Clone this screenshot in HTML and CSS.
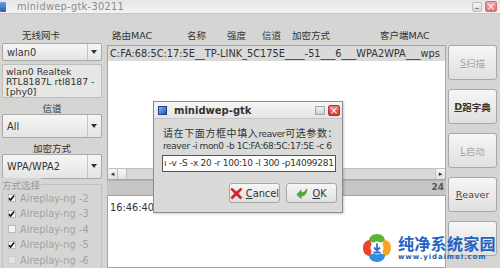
FILE: index.html
```html
<!DOCTYPE html>
<html>
<head>
<meta charset="utf-8">
<link rel="stylesheet" href="styles.css">
</head>
<body>
<div class="titlebar">
  <span class="appicon"></span>
  <span class="title">minidwep-gtk-30211</span>
  <span class="tb-spacer"></span>
  <span class="tb-min"></span>
  <span class="tb-close">×</span>
</div>
<div class="main">
  <div class="left">
    <div class="lhead">无线网卡</div>
    <div class="combo c-wlan"><span class="cval">wlan0</span><span class="carrow"></span></div>
    <div class="devinfo">wlan0 Realtek<br>RTL8187L rtl8187 -<br>[phy0]</div>
    <div class="llabel">信道</div>
    <div class="combo c-big"><span class="cval">All</span><span class="carrow"></span></div>
    <div class="llabel">加密方式</div>
    <div class="combo c-big"><span class="cval">WPA/WPA2</span><span class="carrow"></span></div>
    <div class="frame">
      <div class="frame-label">方式选择</div>
      <div class="chk"><span class="box on"><svg viewBox="0 0 8 8"><path d="M1 4.2 L3 6.4 L7 1.2" /></svg></span>Aireplay-ng -2</div>
      <div class="chk"><span class="box on"><svg viewBox="0 0 8 8"><path d="M1 4.2 L3 6.4 L7 1.2" /></svg></span>Aireplay-ng -3</div>
      <div class="chk"><span class="box"></span>Aireplay-ng -4</div>
      <div class="chk"><span class="box on"><svg viewBox="0 0 8 8"><path d="M1 4.2 L3 6.4 L7 1.2" /></svg></span>Aireplay-ng -5</div>
      <div class="chk"><span class="box dim"></span>Aireplay-ng -6</div>
    </div>
  </div>
  <div class="center">
    <div class="chead">
      <span class="h1">路由MAC</span>
      <span class="h2">名称</span>
      <span class="h3">强度</span>
      <span class="h4">信道</span>
      <span class="h5">加密方式</span>
      <span class="h6">客户端MAC</span>
    </div>
    <div class="list">
      <div class="row">C:FA:68:5C:17:5E__TP-LINK_5C175E____-51___6___WPA2WPA___wps</div>
    </div>
    <div class="hscroll">
      <span class="sarrow">◂</span><span class="sthumb"></span><span class="strack"></span><span class="sarrow r">▸</span>
    </div>
    <div class="status">24</div>
    <div class="log">16:46:40-</div>
  </div>
  <div class="right">
    <div class="btn dis"><u>S</u>扫描</div>
    <div class="btn strong"><u>D</u>跑字典</div>
    <div class="btn dis"><u>L</u>启动</div>
    <div class="btn"><u>R</u>eaver</div>
    <div class="btn"></div>
  </div>
</div>

<div class="dialog">
  <div class="dtitle">
    <span class="dicon"></span>
    <span class="dname">minidwep-gtk</span>
    <span class="tb-spacer"></span>
    <span class="d-max"></span>
    <span class="d-close">×</span>
  </div>
  <div class="dbody">
    <div class="dtext"><span class="cjk">请在下面方框中填入</span>reaver<span class="cjk">可选参数：</span></div>
    <div class="dtext">reaver -i mon0 -b 1C:FA:68:5C:17:5E -c 6</div>
    <div class="entry">ı -v -S -x 20 -r 100:10 -l 300 -p14099281</div>
    <div class="dbuttons">
      <div class="dbtn">
        <svg class="ico" viewBox="0 0 14 14"><path d="M2 1 L7 5 L12 1 L13 2.5 L9 7 L13 11.5 L11.5 13 L7 9 L2.5 13 L1 11.5 L5 7 L1 2.5 Z" fill="#d8262c" stroke="#9a1010" stroke-width="0.6"/></svg>
        <span><u>C</u>ancel</span>
      </div>
      <div class="dbtn">
        <svg class="ico" viewBox="0 0 14 14"><path d="M11.5 2 C11.5 8 9 9.5 5.5 9.5 L5.5 12.5 L1 8 L5.5 3.5 L5.5 6.5 C8 6.5 10 5.5 11.5 2 Z" fill="#4fae2e" stroke="#2c7a12" stroke-width="0.6"/></svg>
        <span><u>O</u>K</span>
      </div>
    </div>
  </div>
</div>

<div class="watermark">
  <svg class="wlogo" viewBox="0 0 30 30">
    <path d="M15 1 C20 1 23 4 23 8 L15 11 L7 8 C7 4 10 1 15 1 Z" fill="#5bb533"/>
    <path d="M29 15 C29 20 26 23 22 23 L19 15 L22 7 C26 7 29 10 29 15 Z" fill="#f5a623"/>
    <path d="M15 29 C10 29 7 26 7 22 L15 19 L23 22 C23 26 20 29 15 29 Z" fill="#2f8fe0"/>
    <path d="M1 15 C1 10 4 7 8 7 L11 15 L8 23 C4 23 1 20 1 15 Z" fill="#e8452c"/>
    <circle cx="15" cy="15" r="6.5" fill="#fff"/>
    <path d="M15 10.5 L15 17 M12 14.5 L15 17.5 L18 14.5 M11.5 19.5 L18.5 19.5" stroke="#2a6fd0" stroke-width="1.8" fill="none"/>
  </svg>
  <div class="wtext">
    <div class="wcn">纯净系统家园</div>
    <div class="wurl">www.yidaimei.com</div>
  </div>
</div>
</body>
</html>
```

FILE: styles.css
```css
* { box-sizing: border-box; }
html, body { margin: 0; padding: 0; }
body {
  width: 500px;
  height: 268px;
  overflow: hidden;
  position: relative;
  background: #d5d5d3;
  font-family: "DejaVu Sans", "Noto Sans CJK SC", sans-serif;
  font-size: 9.8px;
  color: #333;
}
u { text-decoration: underline; }

.titlebar {
  height: 14px;
  display: flex;
  align-items: center;
  background: linear-gradient(#e6e6e6, #f3f3f3);
  border-bottom: 1px solid #c8c8c8;
}
.appicon {
  width: 6px; height: 10px;
  background: linear-gradient(#6a9be0, #2a5fb8);
  border-radius: 1px;
}
.title {
  margin-left: 11px;
  color: #8a8a8a;
  font-size: 9.8px;
  letter-spacing: 0.3px;
}
.tb-spacer { flex: 1; }
.tb-min {
  width: 10px; height: 10px;
  margin-right: 3px;
  background: linear-gradient(#f4f4f4, #d8d8d8);
  border: 1px solid #bbb;
  border-radius: 2px;
  position: relative;
}
.tb-min::after {
  content: ""; position: absolute; left: 2px; right: 2px; bottom: 2px; height: 1px; background: #888;
}
.tb-close {
  width: 12px; height: 11px;
  margin-right: 3px;
  background: linear-gradient(#f4a4a4, #e07070);
  border: 1px solid #d07070;
  border-radius: 2px;
  color: #fff;
  font-size: 10px;
  line-height: 9px;
  text-align: center;
}

.main {
  display: flex;
  height: 254px;
}
.left {
  width: 100px;
  margin-left: 2px;
  display: flex;
  flex-direction: column;
}
.lhead {
  height: 30px;
  padding-top: 14px;
  padding-left: 20px;
  font-size: 9.5px;
}
.combo {
  display: flex;
  align-items: center;
  background: linear-gradient(#f6f6f6, #e4e4e4);
  border: 1px solid #a9a9a9;
  border-radius: 2px;
}
.c-wlan { height: 20px; }
.c-big { height: 26px; }
.cval { flex: 1; padding-left: 4px; }
.carrow {
  width: 14px;
  height: 100%;
  border-left: 1px solid #c4c4c4;
  position: relative;
}
.carrow::after {
  content: "";
  position: absolute;
  left: 3px; top: 50%;
  margin-top: -2px;
  border-left: 3.5px solid transparent;
  border-right: 3.5px solid transparent;
  border-top: 4px solid #333;
}
.devinfo {
  margin-top: 3px;
  height: 34px;
  background: #e6e6e4;
  border: 1px solid #bdbdbb;
  padding: 2px 0 0 3px;
  font-size: 9.3px;
  line-height: 10px;
}
.llabel {
  height: 16px;
  padding-top: 3px;
  text-align: center;
  font-size: 9.5px;
}
.frame {
  margin-top: 5px;
  flex: 1;
  border: 1px solid #c0c0be;
  border-bottom: none;
  position: relative;
  padding-top: 6px;
}
.frame-label {
  position: absolute;
  left: -2px; top: -7px;
  padding: 0 1px;
  background: #d5d5d3;
  color: #9a9a9a;
  font-size: 9.5px;
}
.chk {
  display: flex;
  align-items: center;
  height: 15.5px;
  padding-left: 5px;
  color: #a3a3a3;
  font-size: 9.8px;
}
.box {
  width: 8px; height: 8px;
  margin-right: 4px;
  background: #f4f4f4;
  border: 1px solid #bbb;
  display: inline-flex;
}
.box svg { width: 8px; height: 8px; margin: -1px 0 0 -1px; }
.box path { stroke: #111; stroke-width: 1.8; fill: none; }
.box.dim { background: #e2e2e2; border-color: #ccc; }

.center {
  margin-left: 5px;
  width: 339px;
  display: flex;
  flex-direction: column;
}
.chead {
  height: 31px;
  display: flex;
  padding-top: 14px;
  padding-left: 5px;
  font-size: 9.5px;
}
.chead span { display: block; }
.h1 { width: 75px; }
.h2 { width: 40px; }
.h3 { width: 35px; }
.h4 { width: 30px; }
.h5 { width: 88px; }
.list {
  height: 123px;
  background: #fff;
  border: 1px solid #a5a5a5;
  border-bottom: none;
}
.row {
  height: 15px;
  background: #dadada;
  padding-left: 2px;
  line-height: 15px;
  white-space: nowrap;
  overflow: hidden;
}
.hscroll {
  height: 12px;
  display: flex;
  background: #d9d9d7;
  border: 1px solid #a5a5a5;
  border-top: 1px solid #c0c0c0;
}
.sarrow {
  width: 10px;
  font-size: 7px;
  line-height: 10px;
  text-align: center;
  color: #333;
  background: linear-gradient(#f4f4f4, #e0e0e0);
  border-right: 1px solid #c0c0c0;
}
.sarrow.r { border-right: none; border-left: 1px solid #c0c0c0; }
.sthumb {
  width: 9px;
  background: linear-gradient(#f6f6f6, #e2e2e2);
  border-right: 1px solid #b8b8b8;
}
.strack { flex: 1; }
.status {
  height: 15px;
  background: #c6c6c4;
  border-top: 1px solid #b4b4b2;
  text-align: right;
  padding-right: 2px;
  font-size: 9px;
  font-weight: bold;
  color: #555;
  line-height: 13px;
}
.log {
  flex: 1;
  background: #fff;
  border: 1px solid #a5a5a5;
  padding: 6px 0 0 2px;
}

.right {
  margin-left: 2px;
  width: 49px;
  padding-top: 31px;
  display: flex;
  flex-direction: column;
  gap: 9px;
}
.btn {
  height: 35px;
  flex: none;
  display: flex;
  align-items: center;
  justify-content: center;
  background: linear-gradient(#f6f6f6, #e0e0e0);
  border: 1px solid #a8a8a8;
  border-radius: 3px;
  font-size: 9.5px;
  color: #444;
}
.btn.dis { color: #a8a8a8; }
.btn.strong { font-weight: bold; color: #333; }

.dialog {
  position: absolute;
  left: 153px;
  top: 101px;
  width: 190px;
  height: 112px;
  background: #dadad8;
  border: 1px solid #8c8c8c;
  box-shadow: 1px 1px 2px rgba(0,0,0,0.2);
}
.dtitle {
  height: 17px;
  display: flex;
  align-items: center;
  background: linear-gradient(#f6f6f6, #e4e4e4);
  border-bottom: 1px solid #c4c4c4;
  padding-left: 4px;
}
.dicon {
  width: 9px; height: 9px;
  background: linear-gradient(135deg, #8ab6f0, #2456b0);
  border: 1px solid #1c3f86;
}
.dname {
  margin-left: 7px;
  font-weight: bold;
  font-size: 10px;
  color: #333;
}
.d-max {
  width: 10px; height: 9px;
  margin-right: 3px;
  border: 1px solid #9aa;
  background: linear-gradient(#eef2f6, #c8d2dc);
}
.d-close {
  width: 12px; height: 11px;
  margin-right: 2px;
  background: linear-gradient(#f08080, #d03838);
  border: 1px solid #b03030;
  border-radius: 2px;
  color: #fff;
  font-size: 10px;
  line-height: 9px;
  text-align: center;
}
.dbody {
  padding: 9px 3px 0 9px;
}
.dtext {
  font-size: 9px;
  letter-spacing: -0.4px;
  line-height: 12px;
  color: #333;
  white-space: nowrap;
}
.cjk {
  font-size: 10px;
  letter-spacing: 0.6px;
}
.entry {
  margin-top: 3px;
  height: 17px;
  width: 174px;
  margin-left: -1px;
  background: #fff;
  border: 1px solid #555;
  font-size: 9px;
  letter-spacing: -0.3px;
  line-height: 15px;
  padding-left: 1px;
  white-space: nowrap;
  overflow: hidden;
}
.dbuttons {
  margin-top: 11px;
  display: flex;
  justify-content: flex-end;
  gap: 6px;
  padding-right: 2px;
}
.dbtn {
  width: 51px;
  height: 20px;
  display: flex;
  align-items: center;
  justify-content: center;
  gap: 3px;
  background: linear-gradient(#f6f6f6, #e0e0e0);
  border: 1px solid #a8a8a8;
  border-radius: 3px;
  font-size: 9.8px;
}
.ico { width: 13px; height: 13px; }

.watermark {
  position: absolute;
  left: 362px;
  top: 233px;
  display: flex;
  align-items: center;
  gap: 6px;
}
.wlogo { width: 30px; height: 30px; }
.wtext { display: flex; flex-direction: column; }
.wcn {
  font-family: "Noto Sans CJK SC", sans-serif;
  font-weight: bold;
  font-size: 16px;
  line-height: 19px;
  color: #1f63c4;
  letter-spacing: 0.3px;
}
.wurl {
  font-size: 7px;
  line-height: 9px;
  color: #2a5ea8;
  letter-spacing: 0.9px;
  font-weight: bold;
}
```
